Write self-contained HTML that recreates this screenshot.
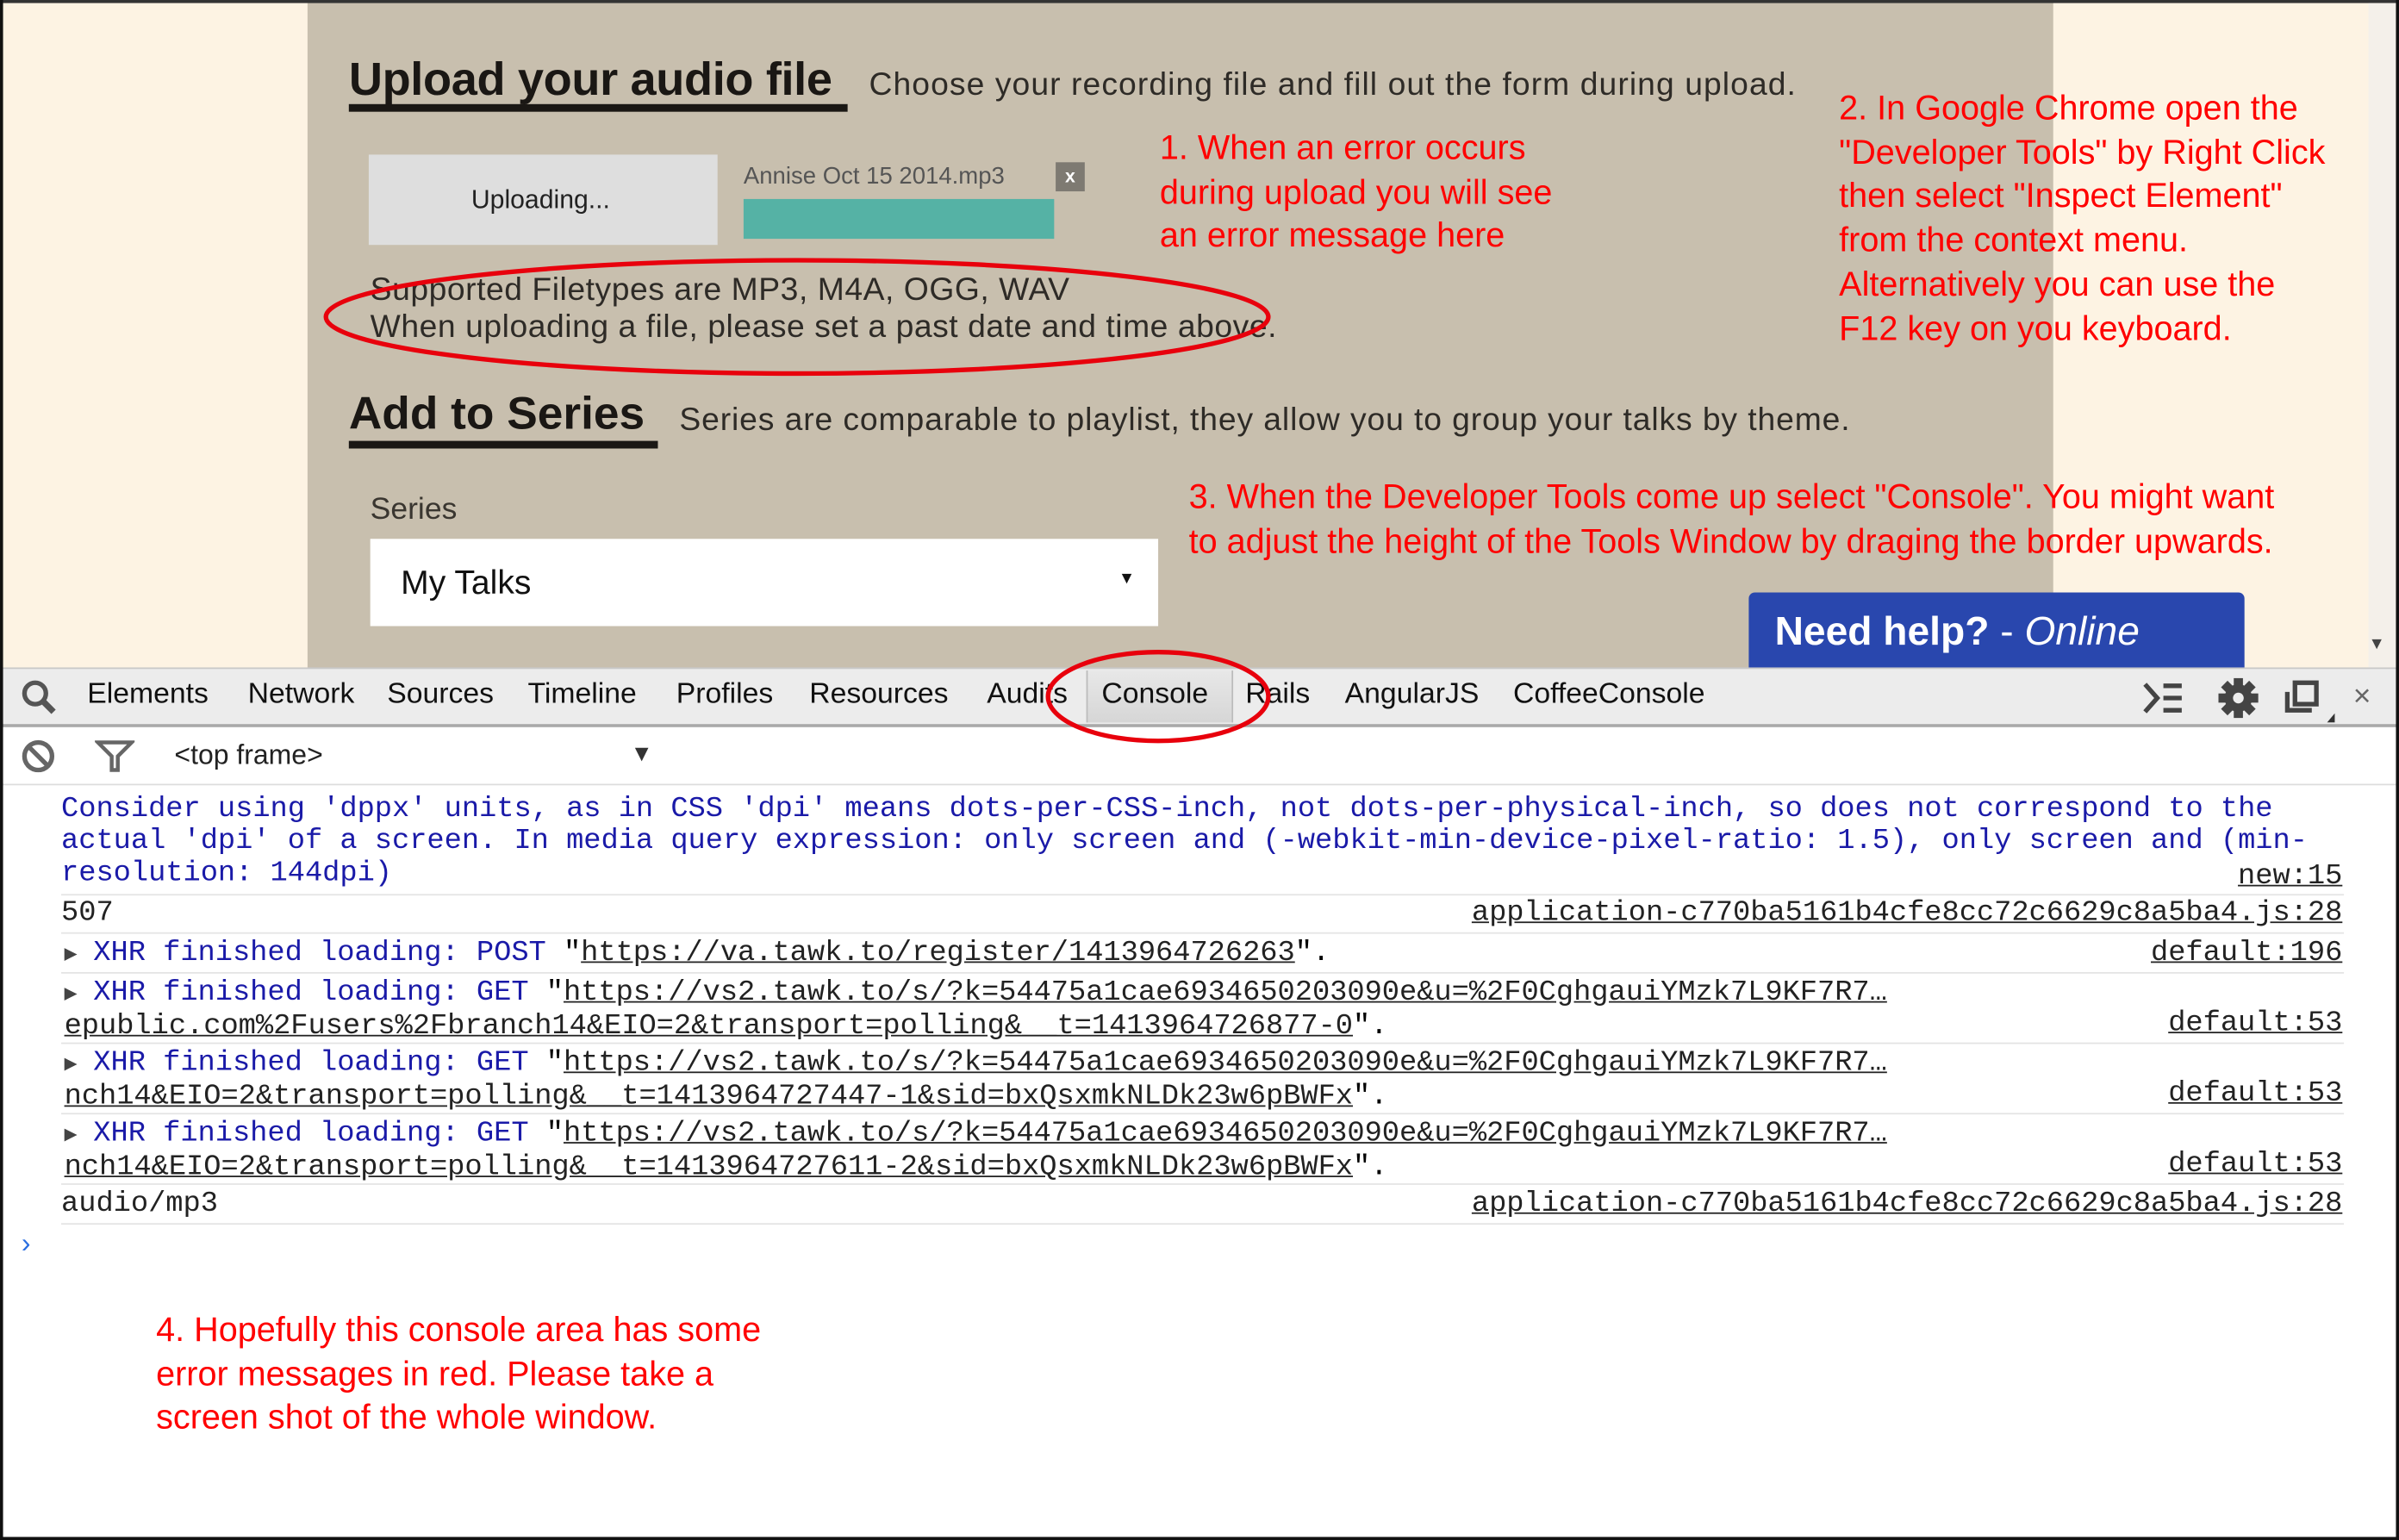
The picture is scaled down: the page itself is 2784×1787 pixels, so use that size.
<!DOCTYPE html>
<html><head><meta charset="utf-8"><style>
html,body{margin:0;padding:0;width:2784px;height:1787px;overflow:hidden;background:#fff}
#s{position:absolute;left:0;top:0;width:1568px;height:1006px;transform:scale(1.77551,1.77634);transform-origin:0 0;font-family:"Liberation Sans",Arial,sans-serif;background:#fff}
.a{position:absolute;white-space:nowrap}
.red{color:#f00;font-size:22.3px;line-height:28.7px}
.mono{font-family:"Liberation Mono",monospace;font-size:19px;line-height:20px;letter-spacing:-0.02px}
.blue{color:#1a1aa8}
.u{text-decoration:underline;color:#222}
.sep{position:absolute;left:40px;right:36px;height:1px;background:#e4e4e4}
.tab{position:absolute;top:443px;font-size:19px;color:#111}
.tri{display:inline-block;width:19px;color:#444;font-size:14px}
</style></head><body><div id="s">
<div class="a" style="left:0;top:0;width:1568px;height:436px;background:#fdf3e3"></div>
<div class="a" style="left:201px;top:0;width:1141px;height:436px;background:#c8bfae"></div>
<div class="a" style="left:0;top:0;width:1568px;height:2px;background:#333"></div>
<div class="a" style="left:1548px;top:2px;width:18px;height:434px;background:#f4f0ea"></div>
<div class="a" style="left:1548px;top:415px;font-size:11px;color:#444">▼</div>

<div class="a" style="left:228px;top:35px;font-size:30.5px;font-weight:bold;color:#1a1714;letter-spacing:-0.2px">Upload your audio file</div>
<div class="a" style="left:228px;top:68px;width:326px;height:5px;background:#1a1714"></div>
<div class="a" style="left:568px;top:44px;font-size:21px;color:#2e2b27;letter-spacing:0.6px">Choose your recording file and fill out the form during upload.</div>

<div class="a" style="left:241px;top:101px;width:228px;height:59px;background:#dedede"></div>
<div class="a" style="left:308px;top:121px;font-size:17px;color:#222">Uploading...</div>
<div class="a" style="left:486px;top:107px;font-size:15.5px;color:#555">Annise Oct 15 2014.mp3</div>
<div class="a" style="left:690px;top:106px;width:19px;height:19px;background:#7e7a72;color:#fff;font-size:12px;text-align:center;line-height:18px;font-weight:bold">x</div>
<div class="a" style="left:486px;top:130px;width:203px;height:26px;background:#55b2a5"></div>

<div class="a" style="left:242px;top:178px;font-size:21px;color:#2e2b27;letter-spacing:0.3px;line-height:23.5px">Supported Filetypes are MP3, M4A, OGG, WAV<br>When uploading a file, please set a past date and time above.</div>

<div class="a" style="left:228px;top:254px;font-size:30px;font-weight:bold;color:#1a1714">Add to Series</div>
<div class="a" style="left:228px;top:288px;width:202px;height:5px;background:#1a1714"></div>
<div class="a" style="left:444px;top:263px;font-size:21px;color:#2e2b27;letter-spacing:0.5px">Series are comparable to playlist, they allow you to group your talks by theme.</div>

<div class="a" style="left:242px;top:322px;font-size:20px;color:#3a3630">Series</div>
<div class="a" style="left:242px;top:352px;width:515px;height:57px;background:#fff"></div>
<div class="a" style="left:262px;top:368px;font-size:22px;color:#111">My Talks</div>
<div class="a" style="left:731px;top:372px;font-size:11px;color:#111">▼</div>

<div class="a" style="left:1143px;top:387px;width:324px;height:49px;background:#2947ae;border-radius:4px 4px 0 0"></div>
<div class="a" style="left:1160px;top:397px;font-size:26px;color:#fff"><b>Need help?</b> - <i>Online</i></div>

<div class="a red" style="left:758px;top:83px">1. When an error occurs<br>during upload you will see<br>an error message here</div>
<div class="a red" style="left:1202px;top:57px">2. In Google Chrome open the<br>"Developer Tools" by Right Click<br>then select "Inspect Element"<br>from the context menu.<br>Alternatively you can use the<br>F12 key on you keyboard.</div>
<div class="a red" style="left:777px;top:311px">3. When the Developer Tools come up select "Console". You might want<br>to adjust the height of the Tools Window by draging the border upwards.</div>

<div class="a" style="left:0;top:436px;width:1568px;height:36px;background:#ececec;border-top:1px solid #c8c8c8;border-bottom:2px solid #a9a9a9"></div>
<svg class="a" style="left:13px;top:443px" width="26" height="26" viewBox="0 0 26 26"><circle cx="10" cy="10" r="7" fill="none" stroke="#555" stroke-width="3"/><path d="M15 15 L22 22" stroke="#555" stroke-width="4"/></svg>
<div class="tab" style="left:57px">Elements</div>
<div class="tab" style="left:162px">Network</div>
<div class="tab" style="left:253px">Sources</div>
<div class="tab" style="left:345px">Timeline</div>
<div class="tab" style="left:442px">Profiles</div>
<div class="tab" style="left:529px">Resources</div>
<div class="tab" style="left:645px">Audits</div>
<div class="a" style="left:710px;top:438px;width:94px;height:34px;background:linear-gradient(#e8e8e8,#d6d6d6);border-left:1px solid #bbb;border-right:1px solid #bbb"></div>
<div class="tab" style="left:720px">Console</div>
<div class="tab" style="left:814px">Rails</div>
<div class="tab" style="left:879px">AngularJS</div>
<div class="tab" style="left:989px">CoffeeConsole</div>
<svg class="a" style="left:1400px;top:444px" width="30" height="24" viewBox="0 0 30 24"><path d="M2 3 L10 12 L2 21" fill="none" stroke="#444" stroke-width="3"/><path d="M14 4h12M14 12h12M14 20h12" stroke="#444" stroke-width="3"/></svg>
<svg class="a" style="left:1449px;top:442px" width="28" height="28" viewBox="0 0 28 28"><g fill="#444"><circle cx="14" cy="14" r="9"/><rect x="11" y="1" width="6" height="26"/><rect x="1" y="11" width="26" height="6"/><rect x="11" y="1" width="6" height="26" transform="rotate(45 14 14)"/><rect x="11" y="1" width="6" height="26" transform="rotate(-45 14 14)"/></g><circle cx="14" cy="14" r="3.5" fill="#ececec"/></svg>
<svg class="a" style="left:1493px;top:444px" width="36" height="28" viewBox="0 0 36 28"><rect x="7" y="2" width="14" height="14" fill="none" stroke="#444" stroke-width="3"/><path d="M2 8v12h16" fill="none" stroke="#444" stroke-width="3"/><path d="M28 28 L33 28 L33 22 Z" fill="#333"/></svg>
<div class="a" style="left:1538px;top:444px;font-size:20px;color:#666">×</div>
<svg class="a" style="left:680px;top:422px" width="160" height="66"><ellipse cx="77" cy="33" rx="72" ry="29" fill="none" stroke="#e8000c" stroke-width="3"/></svg>

<svg class="a" style="left:13px;top:482px" width="26" height="24" viewBox="0 0 26 24"><circle cx="12" cy="12" r="9" fill="none" stroke="#666" stroke-width="3"/><path d="M6 6 L18 18" stroke="#666" stroke-width="3"/></svg>
<svg class="a" style="left:62px;top:482px" width="26" height="24" viewBox="0 0 26 24"><path d="M2 3 H24 L15 12 V21 H11 V12 Z" fill="none" stroke="#666" stroke-width="2.5"/></svg>
<div class="a" style="left:114px;top:483px;font-size:18px;color:#222">&lt;top frame&gt;</div>
<div class="a" style="left:412px;top:484px;font-size:15px;color:#333">▼</div>
<div class="a" style="left:2px;top:512px;width:1564px;height:1px;background:#ddd"></div>

<div class="a mono blue" style="left:40px;top:518px;line-height:21px">Consider using 'dppx' units, as in CSS 'dpi' means dots-per-CSS-inch, not dots-per-physical-inch, so does not correspond to the<br>actual 'dpi' of a screen. In media query expression: only screen and (-webkit-min-device-pixel-ratio: 1.5), only screen and (min-<br>resolution: 144dpi)</div>
<div class="a mono u" style="right:37px;top:562px">new:15</div>
<div class="sep" style="top:584px"></div>
<div class="a mono" style="left:40px;top:586px;color:#222">507</div>
<div class="a mono u" style="right:37px;top:586px">application-c770ba5161b4cfe8cc72c6629c8a5ba4.js:28</div>
<div class="sep" style="top:609px"></div>
<div class="a mono" style="left:42px;top:612px"><span class="tri">▶</span><span class="blue">XHR finished loading: POST </span>"<span class="u">https://va.tawk.to/register/1413964726263</span>".</div>
<div class="a mono u" style="right:37px;top:612px">default:196</div>
<div class="sep" style="top:635px"></div>
<div class="a mono" style="left:42px;top:638px"><span class="tri">▶</span><span class="blue">XHR finished loading: GET </span>"<span class="u">https://vs2.tawk.to/s/?k=54475a1cae6934650203090e&amp;u=%2F0CghgauiYMzk7L9KF7R7…</span><br><span class="u">epublic.com%2Fusers%2Fbranch14&amp;EIO=2&amp;transport=polling&amp;__t=1413964726877-0</span>".</div>
<div class="a mono u" style="right:37px;top:658px">default:53</div>
<div class="sep" style="top:681px"></div>
<div class="a mono" style="left:42px;top:684px"><span class="tri">▶</span><span class="blue">XHR finished loading: GET </span>"<span class="u">https://vs2.tawk.to/s/?k=54475a1cae6934650203090e&amp;u=%2F0CghgauiYMzk7L9KF7R7…</span><br><span class="u">nch14&amp;EIO=2&amp;transport=polling&amp;__t=1413964727447-1&amp;sid=bxQsxmkNLDk23w6pBWFx</span>".</div>
<div class="a mono u" style="right:37px;top:704px">default:53</div>
<div class="sep" style="top:727px"></div>
<div class="a mono" style="left:42px;top:730px"><span class="tri">▶</span><span class="blue">XHR finished loading: GET </span>"<span class="u">https://vs2.tawk.to/s/?k=54475a1cae6934650203090e&amp;u=%2F0CghgauiYMzk7L9KF7R7…</span><br><span class="u">nch14&amp;EIO=2&amp;transport=polling&amp;__t=1413964727611-2&amp;sid=bxQsxmkNLDk23w6pBWFx</span>".</div>
<div class="a mono u" style="right:37px;top:750px">default:53</div>
<div class="sep" style="top:773px"></div>
<div class="a mono" style="left:40px;top:776px;color:#222">audio/mp3</div>
<div class="a mono u" style="right:37px;top:776px">application-c770ba5161b4cfe8cc72c6629c8a5ba4.js:28</div>
<div class="sep" style="top:799px"></div>
<div class="a" style="left:14px;top:802px;font-size:18px;color:#2a6ee0">›</div>

<div class="a red" style="left:102px;top:855px">4. Hopefully this console area has some<br>error messages in red. Please take a<br>screen shot of the whole window.</div>

<svg class="a" style="left:205px;top:160px" width="640" height="96"><ellipse cx="316" cy="47" rx="308" ry="37" fill="none" stroke="#e8000c" stroke-width="3"/></svg>

<div class="a" style="left:0;top:0;width:2px;height:1006px;background:#111"></div>
<div class="a" style="left:1566px;top:0;width:2px;height:1006px;background:#111"></div>
<div class="a" style="left:0;top:1004px;width:1568px;height:2px;background:#111"></div>
</div></body></html>
